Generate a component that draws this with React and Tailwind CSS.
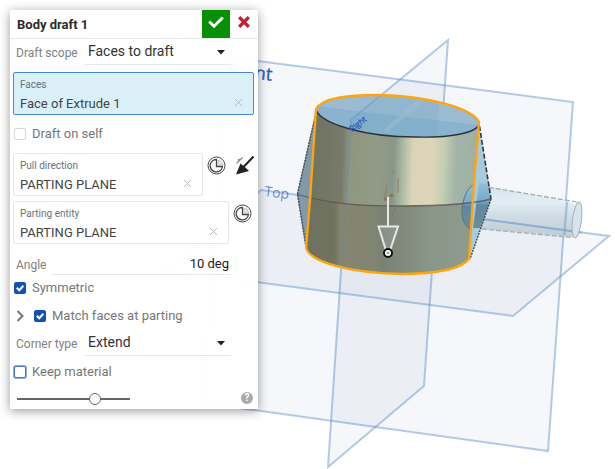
import { useState } from "react";

function CheckBox({ id, label, defaultChecked, outlineClass = "border-gray-300" }) {
  return (
    <div className="flex items-center gap-1">
      <span className="relative flex size-3">
        <input
          id={id}
          type="checkbox"
          defaultChecked={defaultChecked}
          className={`peer size-3 appearance-none rounded-xs border bg-white checked:border-[#1650b0] checked:bg-[#1650b0] ${outlineClass}`}
        />
        <svg
          viewBox="0 0 12 12"
          className="pointer-events-none absolute inset-0 hidden size-3 peer-checked:block"
          fill="none"
          stroke="#fff"
          strokeWidth="2"
        >
          <path d="M2.8 5.8 5.2 8.2 9.4 3.8" />
        </svg>
      </span>
      <label htmlFor={id} className="pl-0.5 text-[13px] leading-5 text-[#777]">
        {label}
      </label>
    </div>
  );
}

function SelectRow({ id, label, options }) {
  return (
    <div className="flex h-[26px] items-end pr-[23px]">
      <label htmlFor={id} className="w-16 shrink-0 pb-0.5 text-xs leading-5 whitespace-nowrap text-[#808080]">
        {label}
      </label>
      <div className="relative ml-1 h-full flex-1 border-b border-gray-200">
        <select
          id={id}
          className="h-6 w-full appearance-none bg-transparent pl-1 text-sm text-[#333] outline-none"
        >
          {options.map((option) => (
            <option key={option}>{option}</option>
          ))}
        </select>
        <svg viewBox="0 0 8 5" className="pointer-events-none absolute top-[11px] right-1.5 h-[5px] w-2">
          <path d="M0 0h8L4 4.6Z" fill="#222" />
        </svg>
      </div>
    </div>
  );
}

function SelectionField({ id, label, value, active }) {
  const [text, setText] = useState(value);
  return (
    <div
      className={`relative h-[43px] flex-1 rounded-xs border px-1.5 pt-1 ${
        active ? "border-[#4a86d4] bg-[#d9f0f9]" : "border-gray-200 bg-white/60"
      }`}
    >
      <label htmlFor={id} className="block text-[10px] leading-4 text-[#66717b]">
        {label}
      </label>
      <input
        id={id}
        readOnly
        value={text}
        className="block h-5 w-full bg-transparent pr-6 text-[13px] text-[#444] outline-none"
      />
      <button
        type="button"
        aria-label={`Clear ${label}`}
        onClick={() => setText("")}
        className="absolute right-2.5 bottom-[7px]"
      >
        <svg viewBox="0 0 9 9" className="size-[9px]" stroke="#b5bcc0" fill="none">
          <path d="M1 1 8 8M8 1 1 8" />
        </svg>
      </button>
    </div>
  );
}

function MateConnectorButton({ label }) {
  return (
    <button type="button" aria-label={label} className="mt-[3px] size-[19px] shrink-0">
      <svg viewBox="0 0 19 19" className="size-full" fill="none" stroke="#444">
        <circle cx="9.5" cy="9.5" r="8.5" />
        <path d="M9.500 3.500A6.200 6.200 0 1 0 15.500 10.500H9.500Z" strokeWidth="1.300" />
        <path d="M11 4v5h4.800A6 6 0 0 0 11 4Z" fill="#e9e9e9" stroke="#999" strokeWidth="0.500" />
      </svg>
    </button>
  );
}

function FlipButton() {
  return (
    <button type="button" aria-label="Flip direction" className="mt-[3px] h-[19px] w-[18px] shrink-0">
      <svg viewBox="0 0 18 19" className="size-full">
        <path d="m0.500 7.500 6-6M1.500 4 5 3" stroke="#888" strokeWidth="1.200" />
        <path d="m17.500 0.500-10 10.500" stroke="#222" strokeWidth="2" />
        <path d="M0 18.500 4.500 7.500l3 2.500 3.500 3 2 2Z" fill="#222" />
      </svg>
    </button>
  );
}

function ModelView() {
  const body =
    "M306 248 310 200 316 109C322 98 346 95 378 95 428 96 472 108 479 122L474 182 469 259C461 269 435 274 400 274 350 273 310 262 306 248Z";
  return (
    <svg
      viewBox="0 0 615 469"
      preserveAspectRatio="xMinYMin slice"
      className="block h-screen w-full"
      role="img"
      aria-label="Model view"
    >
      <defs>
        <linearGradient id="upper" gradientUnits="userSpaceOnUse" x1="308" y1="150" x2="480" y2="156">
          <stop offset="0" stopColor="#70735f" />
          <stop offset="0.2" stopColor="#77796a" />
          <stop offset="0.24" stopColor="#909581" />
          <stop offset="0.4" stopColor="#929b87" />
          <stop offset="0.5" stopColor="#899789" />
          <stop offset="0.56" stopColor="#b0bda6" />
          <stop offset="0.61" stopColor="#d9d4b8" />
          <stop offset="0.72" stopColor="#dfd5bb" />
          <stop offset="0.79" stopColor="#c3ceb3" />
          <stop offset="0.86" stopColor="#a3b5a9" />
          <stop offset="1" stopColor="#9eaea2" />
        </linearGradient>
        <linearGradient id="lower" x1="0" x2="1" y1="0" y2="0">
          <stop offset="0" stopColor="#6c705c" />
          <stop offset="0.22" stopColor="#707360" />
          <stop offset="0.25" stopColor="#86856f" />
          <stop offset="0.42" stopColor="#808472" />
          <stop offset="0.46" stopColor="#7b8273" />
          <stop offset="0.7" stopColor="#89978a" />
          <stop offset="1" stopColor="#919c8d" />
        </linearGradient>
        <linearGradient id="pin" x1="0" x2="0" y1="0" y2="1">
          <stop offset="0" stopColor="#ccdfe9" />
          <stop offset="0.35" stopColor="#dfecf3" />
          <stop offset="0.6" stopColor="#c9d8e0" />
          <stop offset="1" stopColor="#b9c6cd" />
        </linearGradient>
        <linearGradient id="boss" x1="0" x2="0" y1="0" y2="1">
          <stop offset="0" stopColor="#8fbfdd" />
          <stop offset="0.4" stopColor="#79aacb" />
          <stop offset="0.5" stopColor="#5f88a2" />
          <stop offset="1" stopColor="#6e8b9a" />
        </linearGradient>
        <clipPath id="bodyClip">
          <path d={body} />
        </clipPath>
      </defs>

      <g fill="#45749c" fillOpacity="0.055" stroke="#4d86c8" strokeOpacity="0.42" strokeWidth="2">
        <path d="M228 57 573 102 548 451 203 403Z" />
        <path d="M351 120 448 40 424 386 328 467Z" />
        <path d="M261 190 609 236 513 316 165 270Z" />
      </g>
      <g fill="#2f5fbb" fontFamily="Open Sans, sans-serif">
        <text x="227" y="76" fontSize="18" stroke="#2f5fbb" strokeWidth="0.400" transform="rotate(6 227 76)">
          Front
        </text>
        <text x="264" y="196" fontSize="14" fillOpacity="0.7" transform="rotate(7 264 196)">
          Top
        </text>
      </g>

      <path d="M472 184 570 202C584 207 583 230 573 237L472 228Z" fill="url(#pin)" fillOpacity="0.85" />
      <path d="m482 219 100 13.500" stroke="#759fcf" strokeWidth="2" strokeOpacity="0.7" />
      <path d="M567 202 564.500 235" stroke="#7aa5d2" strokeWidth="2" strokeOpacity="0.6" />
      <ellipse cx="577" cy="220" rx="4.500" ry="18" transform="rotate(7 577 220)" fill="#d5e4ed" stroke="#a5afb6" />
      <path d="m475 185 102 17M482 229l90 8.500" fill="none" stroke="#a4abae" strokeWidth="1.300" strokeDasharray="5 2" />

      <path d="M316 111 297 194 306 249 310 200Z" fill="#8199a8" />
      <path d="M479 124 491 199 470 257 474 182Z" fill="#a7cadf" />
      <path d="M479 183 489 184 491 199 480 228 473 228Z" fill="url(#boss)" />
      <path d="M316 113 297.500 194 306 247" fill="none" stroke="#46545c" strokeWidth="1.500" strokeDasharray="2 1" />
      <path d="M479.500 126 491 199" fill="none" stroke="#30383c" strokeWidth="1.600" strokeDasharray="5 2" />
      <path d="m491 199-21 60" fill="none" stroke="#354650" strokeWidth="1.400" strokeDasharray="2 1" />

      <g clipPath="url(#bodyClip)">
        <path d={body} fill="url(#upper)" />
        <path d="M290 191C325 203 355 206 400 206 442 206 468 204 492 199V280H290Z" fill="url(#lower)" />
        <path d="M475 184C466 187 462 202 462 212 462 222 466 228 472 229L482 228V184Z" fill="url(#boss)" />
        <path d="M475 184C466 187 462 202 462 212 462 222 466 228 472 229" fill="none" stroke="#5b7480" />
        <path d="M316 110C320 94 370 92 400 97 438 100 473 112 479 123 477 133 450 138 415 137 365 136 320 123 316 110Z" fill="#9abbd2" />
        <path d="M316 110C322 122 365 136 415 137 450 138 477 133 479 125L382 114 316 106Z" fill="#89b3ce" />
        <path d="m384 129 39-34 8 1-46 38Z" fill="#a5c2d6" fillOpacity="0.5" />
        <path d="m351 119 30-25h58l-2 43-88-2Z" fill="#4d83ae" fillOpacity="0.08" />
      </g>
      <path d="M316 110C322 124 365 137 415 137 450 138 477 133 479 124" fill="none" stroke="#29343a" strokeWidth="1.400" />
      <path d="M297 194C325 203 355 206 400 206 442 206 473 204 491 199" fill="none" stroke="#554f41" strokeOpacity="0.75" strokeWidth="1.300" />
      <path d="m381 95-30 25-5 85-5 61" fill="none" stroke="#5687bd" strokeWidth="1.600" strokeOpacity="0.35" />
      <text
        x="352"
        y="132"
        fontSize="8"
        fontFamily="Open Sans, sans-serif"
        fill="#285bb8"
        stroke="#285bb8"
        strokeWidth="0.300"
        transform="rotate(-38 352 132)"
      >
        Right
      </text>
      <path d={body} fill="none" stroke="#fda50f" strokeWidth="2.400" strokeLinejoin="round" />

      <g fill="none" stroke="#897459" strokeWidth="1" strokeOpacity="0.8">
        <path d="m392 173 3-1.500M398 178v15M387 185l-2 12M395 208l-3 8M386 211l1 5" />
        <circle cx="391.500" cy="195.500" r="1.500" fill="#897459" />
        <circle cx="385.500" cy="199" r="1.500" fill="#897459" />
      </g>
      <path d="M388 197v29M378.500 226.500h19.500l-8 24h-4Z" fill="#aeb7ae" fillOpacity="0.3" stroke="#e5e9ec" strokeWidth="2" />
      <circle cx="388" cy="253" r="4" fill="#fff" stroke="#111" strokeWidth="2" />
      <circle cx="388" cy="253" r="1.300" fill="#999" />
    </svg>
  );
}

export default function App() {
  return (
    <main className="relative min-h-screen overflow-hidden bg-white font-[Roboto,sans-serif]">
      <ModelView />
      <form
        onSubmit={(event) => event.preventDefault()}
        className="absolute top-2.5 left-2.5 w-[248px] bg-white/97 shadow-[0_2px_10px_rgba(0,0,0,0.4)]"
      >
        <header className="flex h-[29px] items-center border-b border-gray-200 bg-white">
          <h1 className="flex-1 pt-0.5 pl-[7px] text-[13px] font-bold text-[#2b2b2b]">Body draft 1</h1>
          <button type="submit" aria-label="Accept" className="flex h-full w-7 items-center justify-center bg-[#059005]">
            <svg viewBox="0 0 16 13" className="mb-1 h-[13px] w-4" fill="none" stroke="#fff" strokeWidth="3">
              <path d="M1.200 5.500 6 10.200 14.800 1.500" />
            </svg>
          </button>
          <button type="button" aria-label="Cancel" className="flex h-full w-7 items-center justify-center">
            <svg viewBox="0 0 12 12" className="mb-1 size-3" fill="none" stroke="#c3202f" strokeWidth="3.300">
              <path d="m1.200 1.200 9.600 9.600M10.800 1.200 1.200 10.800" />
            </svg>
          </button>
        </header>

        <div className="flex flex-col pr-1 pl-[3px]">
          <div className="pl-[3px]">
            <SelectRow id="scope" label="Draft scope" options={["Faces to draft", "Parting line"]} />
          </div>
          <div className="mt-[7px] flex">
            <SelectionField id="faces" label="Faces" value="Face of Extrude 1" active />
          </div>
          <div className="flex h-[38px] items-center pl-px">
            <CheckBox id="self" label="Draft on self" />
          </div>
          <div className="flex gap-1">
            <SelectionField id="pull" label="Pull direction" value="PARTING PLANE" />
            <MateConnectorButton label="Select pull mate connector" />
            <span className="ml-1.5 flex">
              <FlipButton />
            </span>
          </div>
          <div className="mt-[5px] flex gap-1 pr-0.5">
            <SelectionField id="entity" label="Parting entity" value="PARTING PLANE" />
            <MateConnectorButton label="Select parting mate connector" />
          </div>
          <div className="mt-2 flex h-[23px] items-end pr-[23px] pl-[3px]">
            <label htmlFor="angle" className="w-9 text-xs leading-5 text-[#808080]">
              Angle
            </label>
            <input
              id="angle"
              defaultValue="10 deg"
              className="h-full min-w-0 flex-1 border-b border-gray-200 bg-transparent pr-0.5 text-right text-[13px] text-[#222] outline-none"
            />
          </div>
          <div className="mt-[3px] pl-px">
            <CheckBox id="symmetric" label="Symmetric" defaultChecked />
          </div>
          <div className="mt-2 flex items-center gap-2.5 pl-[3px]">
            <button type="button" aria-label="Expand match options">
              <svg viewBox="0 0 8 12" className="h-3 w-2" fill="none" stroke="#777" strokeWidth="2">
                <path d="m1.500 1 5 5-5 5" />
              </svg>
            </button>
            <CheckBox id="match" label="Match faces at parting" defaultChecked />
          </div>
          <div className="mt-1 pl-[3px]">
            <SelectRow id="corner" label="Corner type" options={["Extend", "Round"]} />
          </div>
          <div className="mt-1.5 pl-px">
            <CheckBox id="keep" label="Keep material" outlineClass="border-[#3f72c8] ring-1 ring-[#8eb0e5]" />
          </div>
          <div className="flex h-[27px] items-end justify-between pb-1 pl-1">
            <input
              type="range"
              aria-label="Preview opacity"
              defaultValue="71"
              className="h-3 w-[113px] appearance-none bg-[linear-gradient(#666,#666)] bg-[length:100%_2px] bg-center bg-no-repeat [&::-webkit-slider-thumb]:size-3 [&::-webkit-slider-thumb]:appearance-none [&::-webkit-slider-thumb]:rounded-full [&::-webkit-slider-thumb]:border [&::-webkit-slider-thumb]:border-[#666] [&::-webkit-slider-thumb]:bg-white"
            />
            <button
              type="button"
              aria-label="Help"
              className="mr-px mb-px flex size-3 items-center justify-center rounded-full bg-[#aaa] text-[10px] leading-3 font-bold text-white"
            >
              ?
            </button>
          </div>
        </div>
      </form>
    </main>
  );
}
